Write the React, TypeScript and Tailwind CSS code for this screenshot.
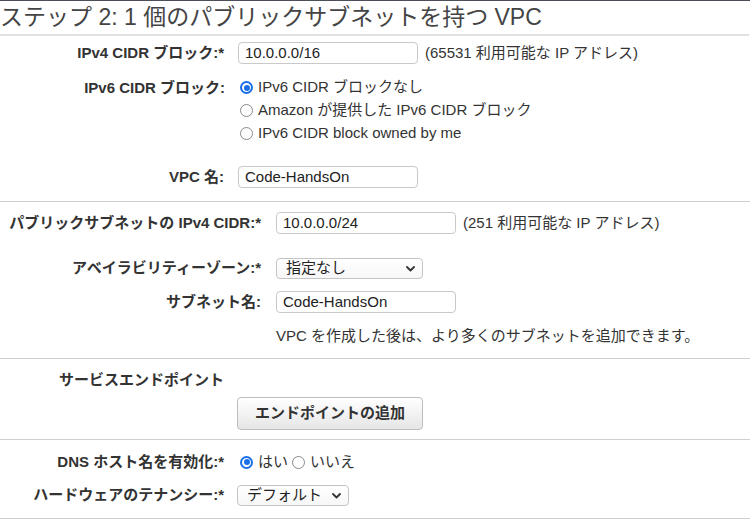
import React from "react";

const font = { fontFamily: '"Liberation Sans", "Noto Sans CJK JP", sans-serif' };

function Radio({ checked }: { checked?: boolean }) {
  return checked ? (
    <span className="inline-flex h-[13px] w-[13px] shrink-0 items-center justify-center rounded-full border-2 border-[#1a6fe8] bg-white">
      <span className="h-[6px] w-[6px] rounded-full bg-[#1a6fe8]" />
    </span>
  ) : (
    <span className="inline-block h-[13px] w-[13px] shrink-0 rounded-full border border-[#8a8a8a] bg-white" />
  );
}

function Input({ value, w }: { value: string; w: string }) {
  return (
    <div className={`flex h-[22px] items-center rounded-[4px] border border-[#c9c9c9] bg-white pl-[6px] text-[15px] text-[#222] ${w}`}>
      {value}
    </div>
  );
}

function Select({ value, w }: { value: string; w: string }) {
  return (
    <div className={`flex h-[21px] items-center justify-between rounded-[4px] border border-[#c4c4c4] bg-gradient-to-b from-white to-[#f7f7f7] pl-[9px] pr-[7px] text-[15px] text-[#222] ${w}`}>
      <span>{value}</span>
      <svg width="9" height="6" viewBox="0 0 9 6">
        <polyline points="1,1 4.5,4.5 8,1" fill="none" stroke="#333" strokeWidth="1.8" strokeLinecap="round" strokeLinejoin="round" />
      </svg>
    </div>
  );
}

function Label({ children, w }: { children: React.ReactNode; w: string }) {
  return <div className={`shrink-0 whitespace-nowrap text-right text-[15px] font-bold text-[#333] ${w}`}>{children}</div>;
}

export default function App() {
  return (
    <div className="h-[527px] w-[750px] overflow-hidden border-t border-[#4b5058] bg-white text-[#333]" style={font}>
      <h1 className="flex h-[33px] items-center whitespace-nowrap text-[23px] font-normal text-[#444]">
        ステップ 2: 1 個のパブリックサブネットを持つ VPC
      </h1>
      <div className="h-[2px] w-[749px] bg-[#e2e2e2]" />

      {/* Section 1 */}
      <div className="mt-[6px] flex h-[22px] items-center">
        <Label w="w-[224px]">IPv4 CIDR ブロック:*</Label>
        <div className="ml-[14px]"><Input value="10.0.0.0/16" w="w-[180px]" /></div>
        <span className="ml-[7px] whitespace-nowrap text-[15px]">(65531 利用可能な IP アドレス)</span>
      </div>

      <div className="mt-[12px] flex">
        <Label w="w-[225px] h-[23px] leading-[23px]">IPv6 CIDR ブロック:</Label>
        <div className="ml-[15px] flex flex-col text-[15px]">
          <div className="flex h-[23px] items-center gap-[5px]"><Radio checked />IPv6 CIDR ブロックなし</div>
          <div className="flex h-[23px] items-center gap-[5px]"><Radio />Amazon が提供した IPv6 CIDR ブロック</div>
          <div className="flex h-[23px] items-center gap-[5px]"><Radio />IPv6 CIDR block owned by me</div>
        </div>
      </div>

      <div className="mt-[21px] flex h-[22px] items-center">
        <Label w="w-[224px]">VPC 名:</Label>
        <div className="ml-[14px]"><Input value="Code-HandsOn" w="w-[180px]" /></div>
      </div>

      <div className="mt-[13px] h-px bg-[#cfcfcf]" />

      {/* Section 2 */}
      <div className="mt-[10px] flex h-[22px] items-center">
        <Label w="w-[261px]">パブリックサブネットの IPv4 CIDR:*</Label>
        <div className="ml-[15px]"><Input value="10.0.0.0/24" w="w-[180px]" /></div>
        <span className="ml-[7px] whitespace-nowrap text-[15px]">(251 利用可能な IP アドレス)</span>
      </div>

      <div className="mt-[24px] flex h-[21px] items-center">
        <Label w="w-[261px]">アベイラビリティーゾーン:*</Label>
        <div className="ml-[15px]"><Select value="指定なし" w="w-[147px]" /></div>
      </div>

      <div className="mt-[12px] flex h-[22px] items-center">
        <Label w="w-[261px]">サブネット名:</Label>
        <div className="ml-[15px]"><Input value="Code-HandsOn" w="w-[180px]" /></div>
      </div>

      <div className="mt-[13px] flex h-[20px] items-center whitespace-nowrap pl-[276px] text-[15px]">
        VPC を作成した後は、より多くのサブネットを追加できます。
      </div>

      <div className="mt-[12px] h-px bg-[#cfcfcf]" />

      {/* Section 3 */}
      <div className="mt-[11px] flex h-[20px] items-center">
        <Label w="w-[224px]">サービスエンドポイント</Label>
      </div>
      <div className="mt-[7px] pl-[237px]">
        <button className="flex h-[33px] w-[186px] items-center justify-center rounded-[4px] border border-[#bdbdbd] bg-gradient-to-b from-white to-[#e6e6e6] text-[15px] font-bold text-[#333]">
          エンドポイントの追加
        </button>
      </div>

      <div className="mt-[9px] h-px bg-[#cfcfcf]" />

      {/* Section 4 */}
      <div className="mt-[12px] flex h-[20px] items-center">
        <Label w="w-[224px]">DNS ホスト名を有効化:*</Label>
        <div className="ml-[16px] flex items-center text-[15px]">
          <Radio checked />
          <span className="ml-[5px]">はい</span>
          <span className="ml-[4px] flex"><Radio /></span>
          <span className="ml-[5px]">いいえ</span>
        </div>
      </div>

      <div className="mt-[13px] flex h-[21px] items-center">
        <Label w="w-[224px]">ハードウェアのテナンシー:*</Label>
        <div className="ml-[13px]"><Select value="デフォルト" w="w-[112px]" /></div>
      </div>

      <div className="mt-[12px] h-px bg-[#cfcfcf]" />
    </div>
  );
}
